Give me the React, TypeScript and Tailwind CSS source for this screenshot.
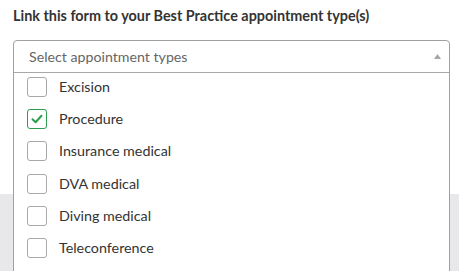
const types = [
  { name: 'Excision', checked: false },
  { name: 'Procedure', checked: true },
  { name: 'Insurance medical', checked: false },
  { name: 'DVA medical', checked: false },
  { name: 'Diving medical', checked: false },
  { name: 'Teleconference', checked: false },
];

function Checkbox({ checked }: { checked: boolean }) {
  return (
    <span
      className={`flex h-[20px] w-[20px] shrink-0 items-center justify-center rounded-[3px] border bg-white ${
        checked ? 'border-[#2a9d4e]' : 'border-[#a8a8a8]'
      }`}
    >
      {checked && (
        <svg width="12" height="10" viewBox="0 0 12 10" fill="none">
          <path d="M1.5 5.2 4.6 8.2 10.5 1.8" stroke="#2a9d4e" strokeWidth="2" strokeLinecap="round" strokeLinejoin="round" />
        </svg>
      )}
    </span>
  );
}

export default function App() {
  return (
    <div
      className="relative h-[271px] w-[459px] overflow-hidden bg-white"
      style={{ fontFamily: 'Lato, "Liberation Sans", sans-serif' }}
    >
      <div className="h-[194px] bg-white px-[13px] pt-[6px]">
        <p className="text-[14.4px] font-bold leading-[20px] text-[#333333]">
          Link this form to your Best Practice appointment type(s)
        </p>
      </div>
      <div className="h-[77px] bg-[#e8e8ea]" />

      <div className="absolute left-[13px] top-[40px] w-[437px] rounded-t-[4px] border border-[#a0a0a0] bg-white">
        <div className="flex h-[32px] items-center justify-between border-b border-[#a8a8a8] pl-[15px] pr-[8px]">
          <span className="text-[14.2px] text-[#666666]">Select appointment types</span>
          <svg width="7" height="5" viewBox="0 0 7 5">
            <path d="M3.5 0 7 5H0z" fill="#a6a6a6" />
          </svg>
        </div>
        <ul className="flex flex-col gap-[12.4px] pb-[20px] pl-[13px] pt-[3.5px]">
          {types.map((t) => (
            <li key={t.name} className="flex h-[20px] items-center gap-[12px]">
              <Checkbox checked={t.checked} />
              <span className="text-[14.3px] leading-[20px] text-[#333333]">{t.name}</span>
            </li>
          ))}
        </ul>
      </div>
    </div>
  );
}
